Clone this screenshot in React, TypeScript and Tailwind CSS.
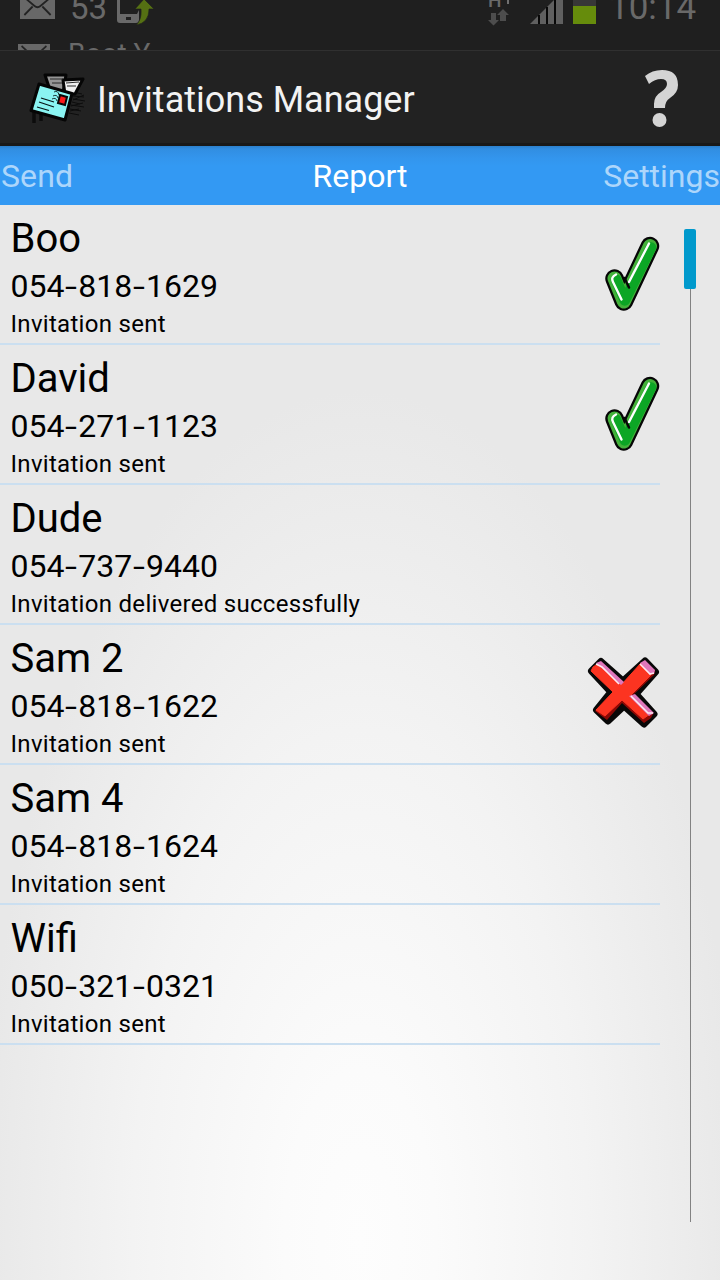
import React from 'react';

type Status = 'ok' | 'fail' | 'none';

interface Contact {
  name: string;
  phone: string;
  note: string;
  status: Status;
}

const contacts: Contact[] = [
  { name: 'Boo', phone: '054-818-1629', note: 'Invitation sent', status: 'ok' },
  { name: 'David', phone: '054-271-1123', note: 'Invitation sent', status: 'ok' },
  { name: 'Dude', phone: '054-737-9440', note: 'Invitation delivered successfully', status: 'none' },
  { name: 'Sam 2', phone: '054-818-1622', note: 'Invitation sent', status: 'fail' },
  { name: 'Sam 4', phone: '054-818-1624', note: 'Invitation sent', status: 'none' },
  { name: 'Wifi', phone: '050-321-0321', note: 'Invitation sent', status: 'none' },
];

function Envelope({ className }: { className: string }) {
  return (
    <svg className={className} viewBox="0 0 36 24" preserveAspectRatio="none" aria-hidden="true">
      <rect width="36" height="24" fill="#686868" />
      <path d="M4 2 L15 11 Q18 13.5 21 11 L32 2 M4.500 20 L13 11.500 M31.500 20 L23 11.500" fill="none" stroke="#222" strokeWidth="1.800" />
    </svg>
  );
}

function StatusBar() {
  return (
    <div className="relative h-[50px] w-full overflow-hidden bg-[#1f1f1f] text-[#696969]">
      <Envelope className="absolute top-[-5px] left-5 h-6 w-[35px]" />
      <span className="absolute top-[-12px] left-[70px] text-[33px] leading-[40px]">53</span>
      <svg className="absolute top-0 left-[116px]" width="40" height="26" viewBox="0 0 40 26" aria-hidden="true">
        <path d="M1 0 H4 V14 H21 L23 10 V20 Q23 23 20 23 H4 Q1 23 1 20 Z" fill="#696969" />
        <rect x="10" y="17" width="5" height="3" fill="#1f1f1f" />
        <path d="M28 -1 L38 9 H33 Q33 23 20 25 Q26 20 25 9 H19 Z" fill="#557013" stroke="#1f1f1f" strokeWidth="0.600" />
      </svg>
      <span className="absolute top-[-9px] left-[488px] text-[19px] leading-[20px] font-medium">H</span>
      <svg className="absolute top-0 left-[488px]" width="24" height="26" viewBox="0 0 24 26" aria-hidden="true">
        <path d="M20 0 V4" stroke="#707070" strokeWidth="2" />
        <path d="M3 13 H8 V20 H11 L5.500 25.500 L0 20 H3 Z M12 21 V15 H9 L15 9 L21 15 H18 V21 Z" fill="#4d4d4d" />
      </svg>
      <svg className="absolute top-0 left-[530px]" width="34" height="24" viewBox="0 0 34 24" aria-hidden="true">
        <path d="M0 24 L24 0 H33 V24 Z" fill="#606060" />
        <path d="M9 15 V24 M17 7 V24 M25 0 V24" stroke="#080808" strokeWidth="2" />
      </svg>
      <div className="absolute top-0 left-[573px] h-6 w-[23px] border-t-[6px] border-[#373737] bg-[#668c0c]" />
      <span className="absolute top-[-12px] left-[609px] text-[35px] leading-[40px] whitespace-nowrap">10:14</span>
      <Envelope className="absolute top-11 left-[18px] h-6 w-8" />
      <span className="absolute top-[39px] left-[68px] text-[28px] leading-[30px] whitespace-nowrap">Boot Y</span>
    </div>
  );
}

function MailLogo() {
  return (
    <svg width="60" height="54" viewBox="0 0 60 54" aria-hidden="true">
      <g stroke="#0c0c0c" fill="none" strokeWidth="1">
        <path d="M46 19 L55 21 M46 23 L57 24 M46 26 L58 28 M45 29 L53 31 M44 32 L57 34 M43 36 L54 38 M42 40 L52 42 M46 27 L57 22 M44 33 L56 30 M43 38 L52 36" />
        <path d="M7 37 V50 M14 40 V48" strokeWidth="3.500" />
      </g>
      <g stroke="#050505" strokeWidth="3" strokeLinejoin="round">
        <path d="M18 2 L39 2 L36 20 H26 L22 14 Z" fill="#959595" />
        <path d="M36 7 L56 6 L48 21 H38 Z" fill="#f0f0f0" />
      </g>
      <path d="M23 6 H36 M25 10 H35" stroke="#292929" strokeWidth="1" />
      <path d="M39 10 L52 9 M40 13 L49 13" stroke="#292929" strokeWidth="1" />
      <path d="M12 11 L45 20.500 L38 47 L4 37.500 Z" fill="#8af4f2" stroke="#050505" strokeWidth="3" strokeLinejoin="round" />
      <path d="M14 25 L27 29 M12 29 L27 34 M10 34 L22 37.500" stroke="#071315" strokeWidth="1.300" />
      <path d="M27 19 q4 -2 5 3 M26 23 q4 -2 5 2 M25 26 q4 -2 5 2" fill="none" stroke="#183335" strokeWidth="1" />
      <path d="M33 22 L40 24 L38 32 L31 30 Z" fill="#fa1919" stroke="#080808" strokeWidth="2" />
    </svg>
  );
}

function CheckMark() {
  return (
    <svg width="56" height="76" viewBox="0 0 56 76" aria-hidden="true">
      <g fill="none" strokeLinecap="round" strokeLinejoin="round">
        <path d="M10.500 42.500 L19.800 65.500 L46 10" stroke="#060606" strokeWidth="18.500" />
        <path d="M10.500 42.500 L19.800 65.500 L46 10" stroke="#43b13a" strokeWidth="14" />
        <path d="M12 43.500 L20.800 64.500 L47 11.500" stroke="#0ca625" strokeWidth="10.500" />
      </g>
      <path d="M20.500 42 L25 51.500" stroke="#060606" strokeWidth="2.500" strokeLinecap="round" />
      <path d="M12 38.500 Q6.500 41 9 46 L17.500 63.500 M45 7.500 L25 46" stroke="#fff" strokeWidth="2.400" fill="none" strokeLinecap="round" />
    </svg>
  );
}

function CrossMark() {
  return (
    <svg width="74" height="72" viewBox="0 0 74 72" aria-hidden="true">
      <path d="M15 4.500 L37 24 L59 4 L69.500 15 L50 37 L68 57 L58 67 L38 49 L22 64 L10.500 53 L25 35 L5.500 14 Z" fill="#080808" stroke="#080808" strokeWidth="7" strokeLinejoin="round" />
      <path d="M8 11 L13 7 L36 27 L57 5 L69 13 L68 18 L47 38 L67 57 L65 61 L58 66 L36 46 L21 63 L9 54 L28 34 L6 15 Z" fill="#8d0804" />
      <path d="M7 10 L13 6 L36 27 L55 6 L64 15 L65 18 L45 38 L64 57 L57 62 L36 43 L19 59 L10 53 L27 35 L5 14 Z" fill="#fc3421" stroke="#fc3421" strokeLinejoin="round" />
      <path d="M10 6 L15 4 L38 25 L35 28 Z M54 6 L59 3 L69 13 L68 17 L63 16 Z M43 39 L49 37 L68 56 L63 59 Z" fill="#df77bb" />
      <path d="M10 7 L16 10 L33 27 M54 7 L64 17 L68 16 M45 39 L62 56 L67 56" fill="none" stroke="#ffe9f0" strokeWidth="1.600" />
    </svg>
  );
}

function PhoneNumber({ value }: { value: string }) {
  const groups = value.split('-');
  return (
    <div className="mt-[5px] flex h-[36px] items-center text-[32px] leading-[36px]">
      {groups.map((group, index) => (
        <React.Fragment key={index}>
          {index > 0 && <span className="w-[13.800px] scale-x-135 text-center">-</span>}
          <span>{group}</span>
        </React.Fragment>
      ))}
    </div>
  );
}

function ContactRow({ contact }: { contact: Contact }) {
  return (
    <li className="flex h-[140px] w-[660px] justify-between border-b-2 border-[#cbdff0]">
      <div className="pt-2.5 pl-[10.500px]">
        <div className="h-[48px] text-[40px] leading-[48px]">{contact.name}</div>
        <PhoneNumber value={contact.phone} />
        <div className="mt-[5px] text-[24px] leading-[30px] tracking-[0.300px] whitespace-nowrap">{contact.note}</div>
      </div>
      {contact.status === 'ok' && <div className="pt-[31px]"><CheckMark /></div>}
      {contact.status === 'fail' && <div className="pt-[32px]"><CrossMark /></div>}
    </li>
  );
}

export default function App() {
  return (
    <div className="flex h-[1280px] w-[720px] flex-col overflow-hidden bg-[#e7e7e7] font-['Roboto',sans-serif] text-black">
      <StatusBar />
      <header className="flex h-24 shrink-0 items-center border-t border-b-[3px] border-t-[#303030] border-b-[#191919] bg-[#222] pt-[6px]">
        <div className="ml-[27px] w-[60px] shrink-0"><MailLogo /></div>
        <h1 className="ml-[10px] text-[36px] leading-[44px] whitespace-nowrap text-[#f3f3f3]">Invitations Manager</h1>
        <svg className="mr-[39px] ml-auto" width="36" height="60" viewBox="0 0 36 60" aria-label="Help">
          <path d="M0 6 Q7 0 17 0 Q33 0 33 15 Q33 23 25 28 Q20 31 20 38 H9 V34 Q9 26 16 22 Q22 18 22 14 Q22 9 16 9 Q10 9 4 14 Z" fill="#d4d4d4" />
          <circle cx="14.500" cy="50" r="7" fill="#d4d4d4" />
        </svg>
      </header>
      <nav className="grid h-[59px] shrink-0 grid-cols-3 items-center bg-[linear-gradient(#2c80cc_0,#318ee2_3px,#3395ed_12px,#3399f3_20px)] pt-px text-[32px] leading-[40px] text-[#add6fb]">
        <span className="pl-px tracking-[0.100px]">Send</span>
        <span className="text-center text-white">Report</span>
        <span className="text-right">Settings</span>
      </nav>
      <main className="flex min-h-0 flex-1 bg-[radial-gradient(ellipse_380px_850px_at_50%_1035px,#fdfdfd_0,#fbfbfb_20%,#f3f3f3_60%,#e8e8e8_100%)]">
        <ul className="w-[684px] shrink-0">
          {contacts.map((contact) => <ContactRow key={contact.name} contact={contact} />)}
        </ul>
        <div className="flex w-3 flex-col items-center pt-6">
          <div className="h-[60px] w-3 rounded-[2px] bg-[#0099cc]" />
          <div className="ml-px h-[933px] w-px bg-[#828282]" />
        </div>
      </main>
    </div>
  );
}
